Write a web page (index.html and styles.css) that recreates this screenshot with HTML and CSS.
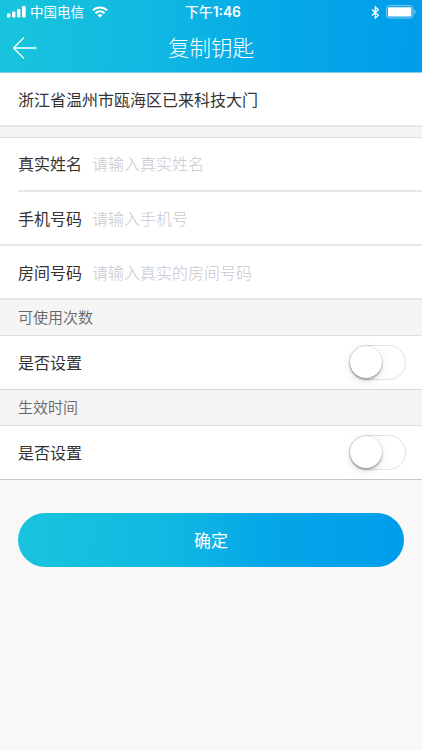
FILE: index.html
```
<!DOCTYPE html>
<html lang="zh-CN">
<head>
<meta charset="utf-8">
<title>复制钥匙</title>
<link rel="stylesheet" href="styles.css">
</head>
<body>
<header class="header">
  <div class="status">
    <div class="status-left">
      <svg class="signal" width="19" height="12" viewBox="0 0 19 12" fill="#fff"><rect x="0" y="7.5" width="3.4" height="4" rx="1"/><rect x="5" y="5.5" width="3.4" height="6" rx="1"/><rect x="10" y="3" width="3.4" height="8.5" rx="1"/><rect x="15" y="0" width="3.6" height="11.5" rx="1"/></svg>
      <span class="carrier">中国电信</span>
      <svg class="wifi" width="16" height="12" viewBox="0 0 16 12" fill="none" stroke="#fff" stroke-width="2"><path d="M.9 4.4a10.1 10.1 0 0 1 14.2 0M3.5 7.2a6.4 6.4 0 0 1 9 0"/><path d="M5.5 9.1a3.6 3.6 0 0 1 5 0L8 11.7z" fill="#fff" stroke="none"/></svg>
    </div>
    <div class="time"><span class="period">下午</span>1:46</div>
    <div class="status-right">
      <svg width="9" height="13" viewBox="0 0 9 13" fill="none" stroke="#fff" stroke-width="1.3"><path d="M1 3.5l6.3 5.8-3 2.7V1l3 2.7L1 9.5"/></svg>
      <svg width="30" height="14" viewBox="0 0 30 14"><rect x=".6" y=".6" width="26.4" height="12.4" rx="3" fill="none" stroke="#fff" stroke-opacity=".5"/><rect x="2" y="2.2" width="23.4" height="9.2" rx="1.2" fill="#fff"/><path d="M28.2 4.7c1.8.7 1.8 3.4 0 4.1z" fill="#fff" fill-opacity=".55"/></svg>
    </div>
  </div>
  <div class="nav">
    <svg class="back" width="26" height="24" viewBox="0 0 26 24" fill="none" stroke="#fff" stroke-width="1.3"><path d="M12 1.5L1.5 12 12 22.5M1.5 12H24.5"/></svg>
    <h1 class="title">复制钥匙</h1>
  </div>
</header>
<main>
  <div class="row address">浙江省温州市瓯海区已来科技大门</div>
  <div class="gap"></div>
  <div class="row field inset"><span class="label">真实姓名</span><span class="hint">请输入真实姓名</span></div>
  <div class="row field"><span class="label">手机号码</span><span class="hint">请输入手机号</span></div>
  <div class="row field"><span class="label">房间号码</span><span class="hint">请输入真实的房间号码</span></div>
  <div class="section">可使用次数</div>
  <div class="row setting"><span class="label">是否设置</span><span class="switch"><span class="knob"></span></span></div>
  <div class="section">生效时间</div>
  <div class="row setting last"><span class="label">是否设置</span><span class="switch"><span class="knob"></span></span></div>
  <button class="submit" type="button">确定</button>
</main>
</body>
</html>
```
FILE: styles.css
```
* { box-sizing: border-box; }
body {
  margin: 0;
  height: 750px;
  overflow: hidden;
  background: #f8f8f8;
  color: #333;
  font-family: "Noto Sans CJK SC", sans-serif;
  font-size: 16px;
}
.header {
  height: 73px;
  color: #fff;
  background: linear-gradient(93deg, #18c4dc 0%, #10b9e2 35%, #05a9e8 65%, #019cea 100%);
  border-bottom: 1px solid #80cdea;
}
.status {
  display: grid;
  grid-template-columns: 1fr auto 1fr;
  align-items: center;
  height: 24px;
  padding: 0 6px 0 7px;
}
.status-left, .status-right { display: flex; align-items: center; }
.status-right { justify-content: flex-end; gap: 6px; }
.carrier { margin: 0 8px 0 4px; padding-bottom: 2px; font-size: 13.5px; line-height: 22px; }
.time { margin-left: 3px; font-family: Inter, "Noto Sans CJK SC", sans-serif; font-size: 13.8px; font-weight: 600; line-height: 24px; }
.period { font-weight: 500; }
.nav {
  display: grid;
  grid-template-columns: 50px 1fr 50px;
  align-items: center;
  height: 47px;
  padding: 0 12px;
}
.title { grid-column: 2; margin: 0; padding-bottom: 2px; font-size: 21.5px; font-weight: 300; line-height: 45px; text-align: center; }
.row {
  display: flex;
  align-items: center;
  height: 54px;
  padding: 0 16px 0 18px;
  background: #fff;
  border-bottom: 2px solid #e6e6e7;
  line-height: 24px;
}
.address { padding-bottom: 1px; }
.gap { height: 11px; background: #f5f5f5; border-bottom: 1px solid #dedfe1; }
.field { gap: 10px; }
.inset {
  margin-left: 18px;
  padding-left: 0;
  padding-bottom: 2px;
  box-shadow: -18px 0 #fff;
}
.hint { color: #c8c8ce; font-weight: 300; }
.section {
  display: flex;
  align-items: center;
  height: 36px;
  padding: 0 0 2px 18px;
  background: #f5f5f5;
  border-bottom: 1px solid #dedfe1;
  color: #666;
  font-size: 15px;
  font-weight: 350;
}
.setting { justify-content: space-between; border-bottom: 1px solid #d8d8da; }
.setting .label { padding-bottom: 2px; }
.last { border-bottom-color: #c8c8ca; }
.switch {
  width: 57px;
  height: 35px;
  border: 1.5px solid #e1e1e2;
  border-radius: 18px;
  background: #fff;
}
.knob {
  display: block;
  width: 32px;
  height: 32px;
  border-radius: 50%;
  background: #fff;
  box-shadow: 0 0 1px rgba(0,0,0,.3), 0 2px 2px rgba(0,0,0,.25), 0 3px 9px rgba(0,0,0,.13);
}
.submit {
  display: block;
  width: 386px;
  height: 54px;
  margin: 33px 18px 0;
  padding: 0;
  border: 0;
  border-radius: 27px;
  color: #fff;
  background: linear-gradient(92deg, #18c4dc 0%, #10b9e2 38%, #04a6e8 66%, #019cea 100%);
  font: 400 17px/54px "Noto Sans CJK SC", sans-serif;
}
```
